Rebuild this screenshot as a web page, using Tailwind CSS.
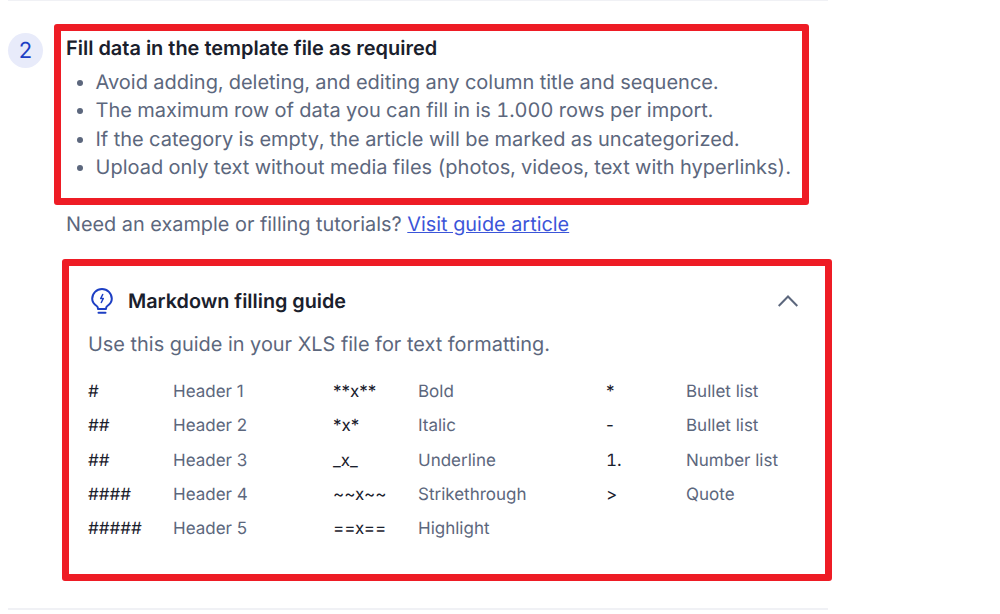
<!DOCTYPE html>
<html lang="en">
<head>
    <meta charset="UTF-8">
    <title>Fill data guide</title>
    <script src="https://cdn.jsdelivr.net/npm/@tailwindcss/browser@4"></script>
</head>
<body class="bg-white h-[614px] overflow-hidden font-['Inter',sans-serif] [text-rendering:geometricPrecision]">
    <div class="w-[820px] ml-[8px] h-[607px] border-y-2 border-[#f0f1f5] -mt-px flex gap-[11px] box-content">
        <!-- Step number -->
        <div class="w-[35px] h-[35px] mt-[32px] pt-px rounded-full bg-[#e8ebfa] text-[#1d3fc4] text-[22px] flex items-center justify-center shrink-0">2</div>

        <div class="flex-1 pt-[23px]">
            <!-- Requirements -->
            <div class="w-[755px] h-[181px] border-[7px] border-[#ee1c25] rounded-[3px] pl-[5px] pt-[3px]">
                <h2 class="text-[19.95px] leading-[28px] font-semibold text-[#1a202c]">Fill data in the template file as required</h2>
                <ul class="mt-[6px] pl-[29.5px] list-disc text-[20px] leading-[28.3px] tabular-nums text-[#5c677d] marker:text-[#5c677d]">
                    <li>Avoid adding, deleting, and editing any column title and sequence.</li>
                    <li>The maximum row of data you can fill in is 1.000 rows per import.</li>
                    <li>If the category is empty, the article will be marked as uncategorized.</li>
                    <li>Upload only text without media files (photos, videos, text with hyperlinks).</li>
                </ul>
            </div>

            <p class="mt-[5px] ml-[12px] text-[19.88px] leading-[28px] text-[#5c677d]">Need an example or filling tutorials? <a href="#" class="text-[#3b55d9] underline">Visit guide article</a></p>

            <!-- Markdown guide -->
            <div class="w-[770px] h-[322px] mt-[21px] ml-[8px] border-[7px] border-[#ee1c25] rounded-[3px] pl-[19px] pr-[27px] pt-[20px]">
                <div class="flex items-center h-[30px]">
                    <svg class="ml-[3px] w-[22px] h-[26px] text-[#1d3fc4]" viewBox="0 0 22 26" fill="none" stroke="currentColor" stroke-width="2" stroke-linecap="round" stroke-linejoin="round">
                        <path d="M7 21c0-1.600-.3-2.300-1.300-3C3 16.200 1.200 13.700 1.200 10.800a9.800 9.800 0 0 1 19.600 0c0 2.900-1.800 5.400-4.500 7.200-1 .7-1.300 1.400-1.300 3z"/>
                        <path d="M7.500 24.800h7"/>
                        <path d="M11.700 6.500l-2 4h2.600l-2 4" stroke-width="1.500"/>
                    </svg>
                    <h3 class="ml-[15px] pt-[1px] text-[19.8px] font-semibold text-[#1a202c]">Markdown filling guide</h3>
                    <svg class="ml-auto w-[20px] h-[12px] text-[#5c677d]" viewBox="0 0 20 12" fill="none" stroke="currentColor" stroke-width="2">
                        <path d="M.700 11 10 1.500 19.300 11"/>
                    </svg>
                </div>
                <p class="mt-[14px] text-[19.92px] leading-[28px] text-[#5c677d]">Use this guide in your XLS file for text formatting.</p>

                <div class="mt-[17.7px] grid grid-cols-[85px_160px_85px_188px_80px_1fr] auto-rows-[34.25px] items-center text-[17px] text-[#5c677d]">
                    <span class="text-[#1a202c]">#</span><span>Header 1</span>
                    <span class="text-[#1a202c]">**x**</span><span>Bold</span>
                    <span class="text-[#1a202c]">*</span><span>Bullet list</span>

                    <span class="text-[#1a202c]">##</span><span>Header 2</span>
                    <span class="text-[#1a202c]">*x*</span><span>Italic</span>
                    <span class="text-[#1a202c]">-</span><span>Bullet list</span>

                    <span class="text-[#1a202c]">##</span><span>Header 3</span>
                    <span class="text-[#1a202c]">_x_</span><span>Underline</span>
                    <span class="text-[#1a202c] tabular-nums">1.</span><span>Number list</span>

                    <span class="text-[#1a202c]">####</span><span>Header 4</span>
                    <span class="text-[#1a202c]">~~x~~</span><span>Strikethrough</span>
                    <span class="text-[#1a202c]">&gt;</span><span>Quote</span>

                    <span class="text-[#1a202c]">#####</span><span>Header 5</span>
                    <span class="text-[#1a202c]">==x==</span><span>Highlight</span>
                </div>
            </div>
        </div>
    </div>
</body>
</html>
